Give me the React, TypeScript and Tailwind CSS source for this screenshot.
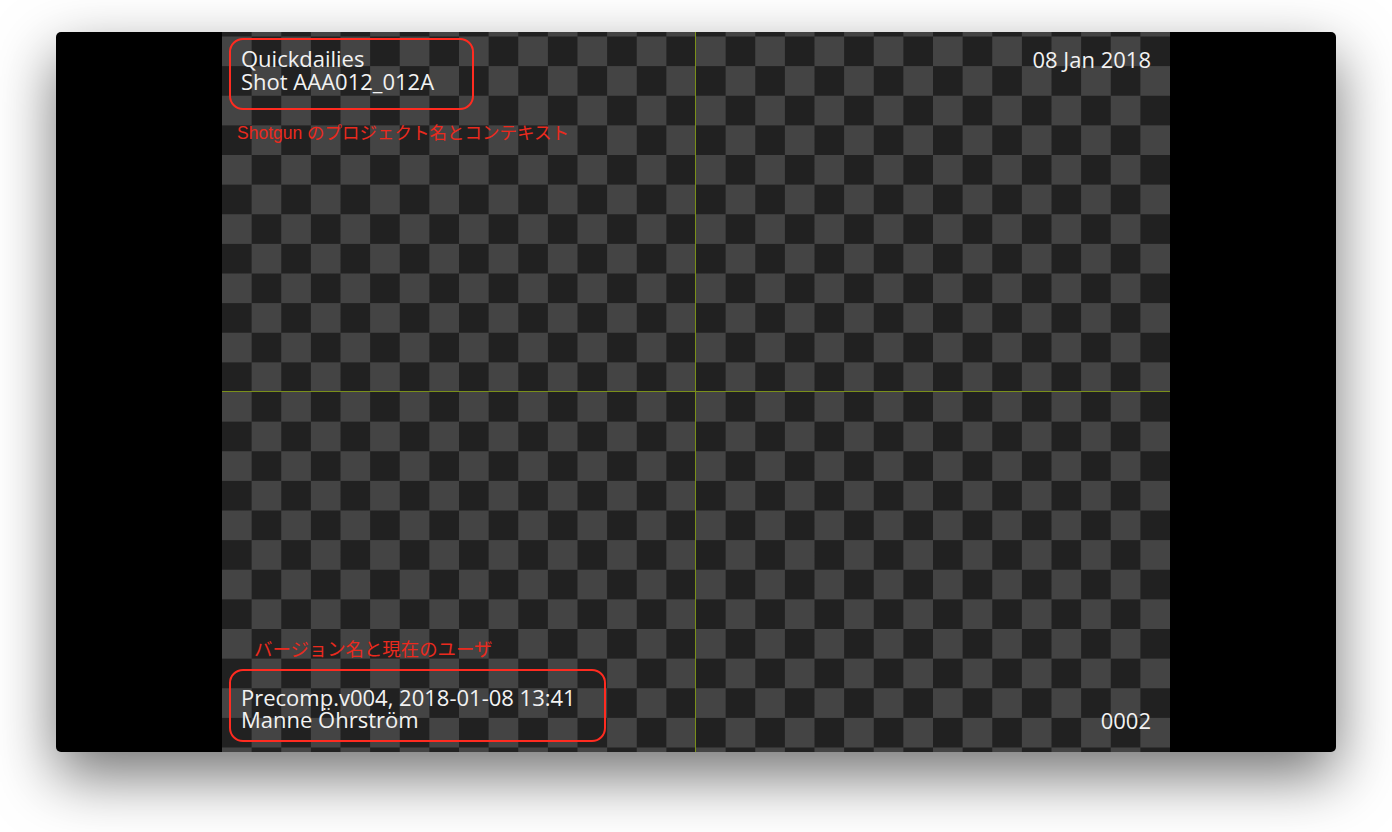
const overlayFont = { fontFamily: '"Open Sans", "Noto Sans", sans-serif' }
const noteFont = { fontFamily: '"Liberation Sans", "Noto Sans CJK JP", sans-serif' }

export default function App() {
  return (
    <div className="flex min-h-[832px] justify-center bg-white pt-8">
      <div className="flex h-[720px] w-[1280px] justify-center overflow-hidden rounded-[5px] bg-black shadow-[0_24px_60px_rgba(0,0,0,0.55)]">
        <div className="relative flex w-[948px] flex-col justify-between bg-[image:repeating-conic-gradient(#212121_0_25%,#444444_0_50%)] bg-[length:59.25px_59.25px] bg-[position:0px_4.5px] px-[7px] pt-[6px] pb-[10px]">
          {/* viewer crosshair */}
          <div className="absolute top-0 bottom-0 left-[473px] w-px bg-[#7a8f1a]" />
          <div className="absolute right-0 left-0 top-[359px] h-px bg-[#7a8f1a]" />

          <div className="relative flex items-start justify-between">
            <div>
              <div
                className="h-[72px] w-[245px] rounded-[14px] border-[2.5px] border-[#ff2b20] px-[10px] pt-[6.5px] text-[22px] leading-[23px] text-[#f2f2f2]"
                style={overlayFont}
              >
                <div>Quickdailies</div>
                <div>Shot AAA012_012A</div>
              </div>
              <p className="mt-[13px] ml-[8px] text-[17.5px] leading-[20px] text-[#ea2a1e]" style={noteFont}>
                Shotgun のプロジェクト名とコンテキスト
              </p>
            </div>
            <div className="pt-[9.5px] pr-[12px] text-[22px] leading-[22px] text-[#f2f2f2]" style={overlayFont}>
              08 Jan 2018
            </div>
          </div>

          <div className="relative flex items-end justify-between">
            <div>
              <p className="mb-[9px] ml-[25px] text-[18.4px] leading-[20px] text-[#ea2a1e]" style={noteFont}>
                バージョン名と現在のユーザ
              </p>
              <div
                className="h-[73px] w-[377px] rounded-[14px] border-[2.5px] border-[#ff2b20] px-[10px] pt-[15px] text-[22px] leading-[22px] text-[#f2f2f2]"
                style={overlayFont}
              >
                <div>Precomp.v004, 2018-01-08 13:41</div>
                <div>Manne Öhrström</div>
              </div>
            </div>
            <div className="pr-[12px] pb-[11.5px] text-[22px] leading-[22px] text-[#f2f2f2]" style={overlayFont}>
              0002
            </div>
          </div>
        </div>
      </div>
    </div>
  )
}
